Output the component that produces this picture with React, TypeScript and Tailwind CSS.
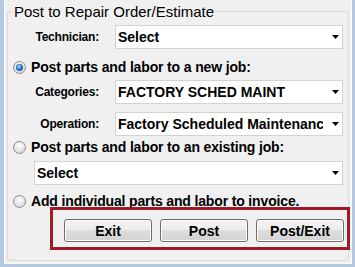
import React from 'react';

const Arrow: React.FC = () => (
  <svg width="7" height="4" viewBox="0 0 7 4" className="shrink-0">
    <path d="M0 0h7L3.5 4z" fill="#000" />
  </svg>
);

const Combo: React.FC<{ value: string; className?: string }> = ({ value, className }) => (
  <div className={`flex h-[24px] items-center border border-[#d3d3d3] bg-white pl-[2px] pr-[3px] ${className ?? ''}`}>
    <span className="mr-[9px] flex-1 overflow-hidden whitespace-nowrap text-[14px] font-bold leading-[16px] text-black">{value}</span>
    <Arrow />
  </div>
);

const Radio: React.FC<{ checked?: boolean }> = ({ checked }) => (
  <svg width="13" height="13" viewBox="0 0 13 13" className="shrink-0">
    <defs>
      <radialGradient id={checked ? 'rbOn' : 'rbOff'} cx="50%" cy="35%" r="70%">
        <stop offset="0%" stopColor="#ffffff" />
        <stop offset="100%" stopColor="#d4d4d4" />
      </radialGradient>
      <radialGradient id="rbDot" cx="40%" cy="35%" r="70%">
        <stop offset="0%" stopColor="#a6e0ff" />
        <stop offset="55%" stopColor="#2f86d8" />
        <stop offset="100%" stopColor="#1b4f9a" />
      </radialGradient>
    </defs>
    <circle cx="6.5" cy="6.5" r="6" fill={`url(#${checked ? 'rbOn' : 'rbOff'})`} stroke="#8d8d8d" />
    {checked && <circle cx="6.5" cy="6.5" r="3.3" fill="url(#rbDot)" stroke="#2a5a96" strokeWidth="0.6" />}
  </svg>
);

const Field: React.FC<{ label: string; value: string; className?: string }> = ({ label, value, className }) => (
  <div className={`flex items-center ${className ?? ''}`}>
    <span className="w-[91px] text-right text-[12px] font-bold leading-[14px] tracking-[-0.2px] text-black">{label}</span>
    <Combo value={value} className="ml-[16px] w-[228px]" />
  </div>
);

const Choice: React.FC<{ label: string; checked?: boolean; className?: string }> = ({ label, checked, className }) => (
  <div className={`flex h-[18px] items-center pl-[5px] ${className ?? ''}`}>
    <Radio checked={checked} />
    <span className="ml-[5px] whitespace-nowrap text-[14px] font-bold leading-[16px] tracking-[-0.15px] text-black">{label}</span>
  </div>
);

const Btn: React.FC<{ label: string }> = ({ label }) => (
  <button className="h-[23px] w-[88px] rounded-[3px] border border-[#707070] bg-[linear-gradient(#f3f3f3_0%,#ececec_50%,#dedede_50%,#d2d2d2_100%)] text-[14px] font-bold leading-[16px] text-black shadow-[inset_0_0_0_1px_#fbfbfb]">
    {label}
  </button>
);

export default function App() {
  return (
    <div className="h-[267px] w-[355px] overflow-hidden border-b-[3px] border-l-[4px] border-r-[3px] border-[#b6c8de] bg-[#f0f0f0] font-['Liberation_Sans',Arial,sans-serif]">
      <div className="h-full w-full border-b border-l border-r border-[#fbfbfb] pl-[2px] pt-[3px]">
        <fieldset className="h-[258px] w-[342px] rounded-[3px] border border-[#d5dadf]">
          <legend className="ml-[5px] px-[1px] text-[15px] leading-[17px] text-black">Post to Repair Order/Estimate</legend>
          <div className="flex flex-col">
            <Field label="Technician:" value="Select" className="mt-[5px]" />
            <Choice label="Post parts and labor to a new job:" checked className="mt-[9px]" />
            <Field label="Categories:" value="FACTORY SCHED MAINT" className="mt-[4px]" />
            <Field label="Operation:" value="Factory Scheduled Maintenance" className="mt-[8px]" />
            <Choice label="Post parts and labor to an existing job:" className="mt-[2px]" />
            <Combo value="Select" className="ml-[26px] mt-[5px] w-[309px]" />
            <Choice label="Add individual parts and labor to invoice." className="mt-[7px]" />
            <div className="-mr-[2px] -mt-[3px] ml-[42px] flex gap-[8px] border-[3px] border-[#9e1c23] pb-[5px] pl-[11px] pt-[9px]">
              <Btn label="Exit" />
              <Btn label="Post" />
              <Btn label="Post/Exit" />
            </div>
          </div>
        </fieldset>
      </div>
    </div>
  );
}
